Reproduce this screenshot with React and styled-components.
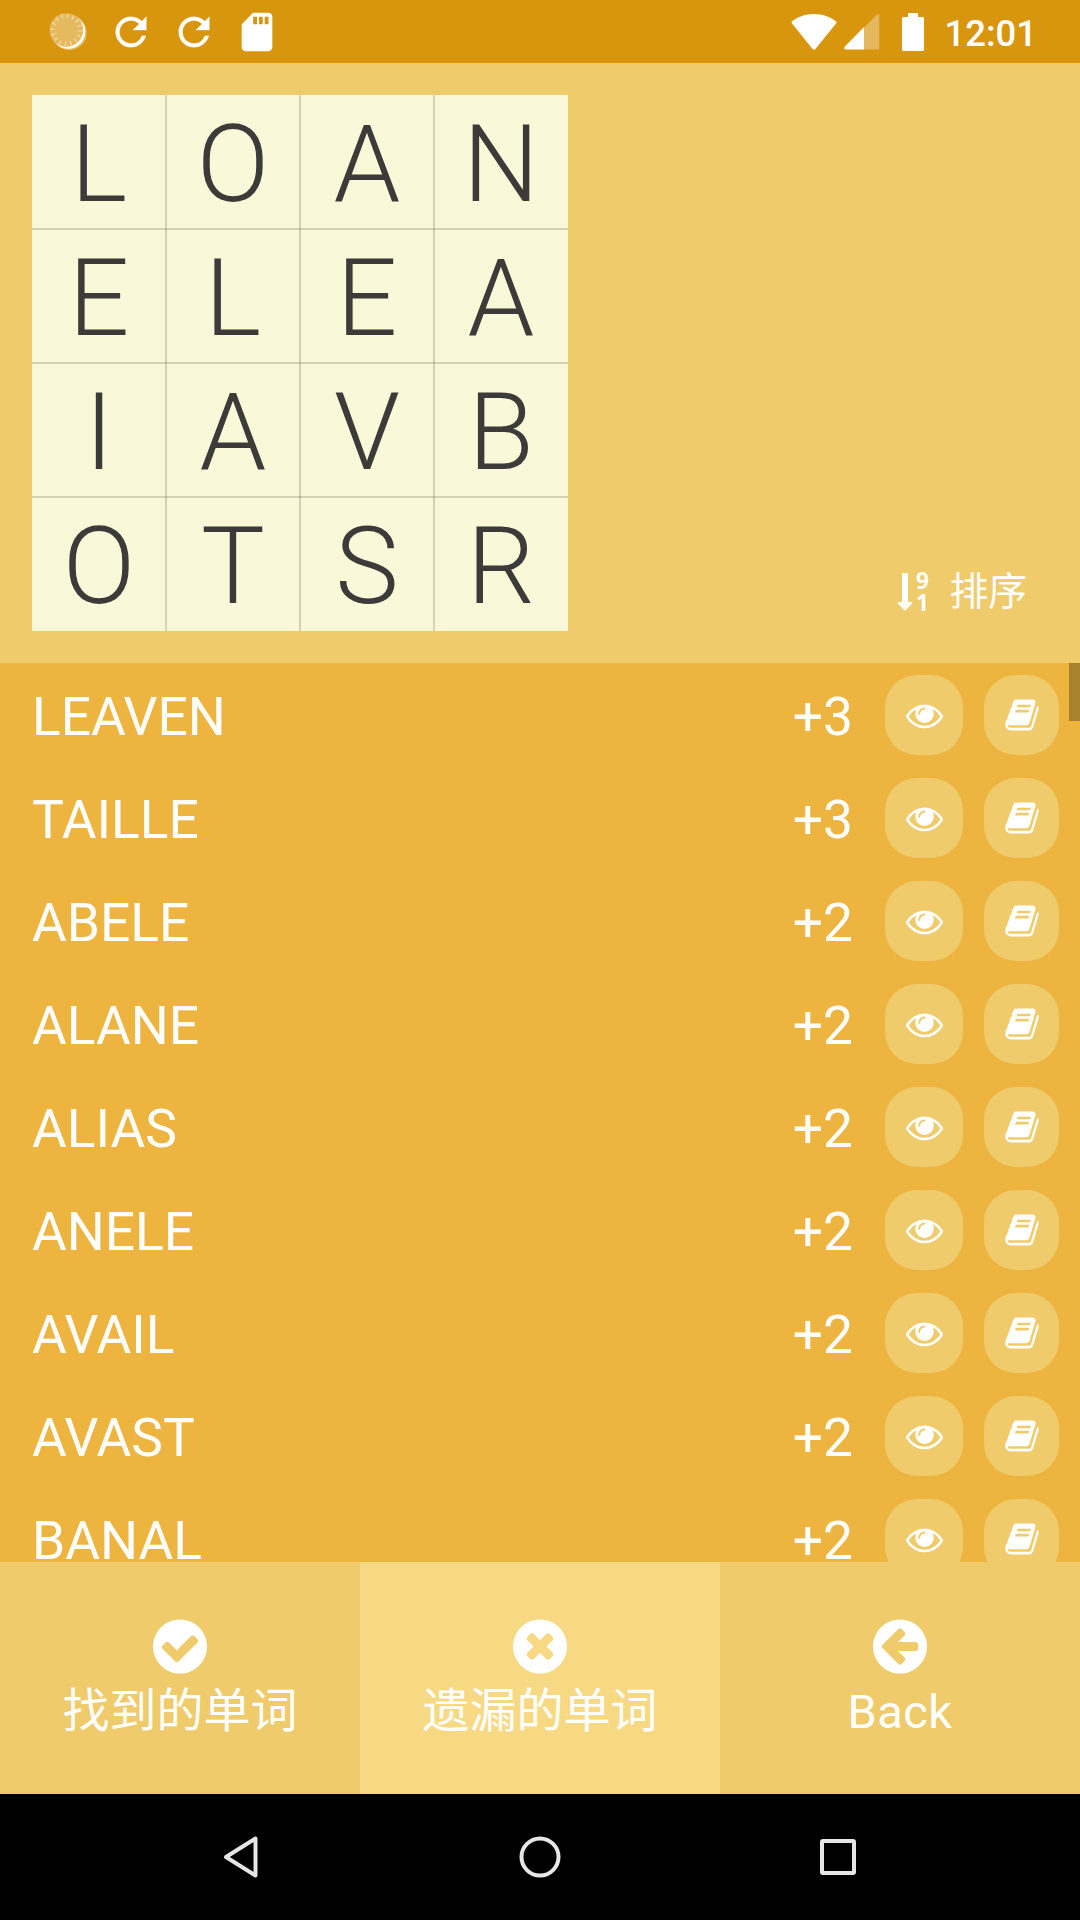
import React from "react";
import styled, { createGlobalStyle } from "styled-components";
import { MdSdCard } from "react-icons/md";

const Global = createGlobalStyle`
  * { box-sizing: border-box; }
  body { margin: 0; background: #000; font-family: Roboto, "Noto Sans CJK SC", sans-serif; }
  svg { display: block; flex: none; }
`;

const Screen = styled.div`
  width: 1080px;
  height: 1920px;
  display: flex;
  flex-direction: column;
  overflow: hidden;
  color: #fff;
`;

const StatusBar = styled.header`
  height: 63px;
  flex: none;
  display: flex;
  align-items: center;
  justify-content: space-between;
  padding: 0 43px 0 48px;
  background: #d8960f;
`;

const StatusGroup = styled.div`
  display: flex;
  align-items: center;
  gap: ${(p) => p.$gap}px;
`;

const Clock = styled.span`
  font-size: 36.5px;
  font-weight: 500;
  line-height: 63px;
  margin-left: 20px;
  padding-top: 3px;
`;

const Header = styled.section`
  height: 600px;
  flex: none;
  display: flex;
  justify-content: space-between;
  align-items: flex-end;
  padding: 32px 53px 32px 32px;
  background: #efcb6b;
`;

const Board = styled.div`
  display: grid;
  grid-template-columns: repeat(4, 134px);
  grid-auto-rows: 134px;
  overflow: hidden;
`;

const line = "rgba(60, 58, 57, 0.2)";
const Cell = styled.div`
  display: flex;
  align-items: center;
  justify-content: center;
  padding-top: 4px;
  background: #f9f8d8;
  color: #3d3b39;
  font-size: 107px;
  font-weight: 300;
  line-height: 107px;
  box-shadow:
    inset ${(p) => (p.$col > 0 ? 1 : 0)}px 0 ${line},
    inset ${(p) => (p.$col < 3 ? -1 : 0)}px 0 ${line},
    inset 0 ${(p) => (p.$row > 0 ? 1 : 0)}px ${line},
    inset 0 ${(p) => (p.$row < 3 ? -1 : 0)}px ${line};
`;

const SortButton = styled.div`
  display: flex;
  align-items: center;
  height: 42px;
  margin-bottom: 18px;
`;

const SortDigits = styled.div`
  display: flex;
  flex-direction: column;
  width: 14px;
  margin: 0 20px 0 2px;
  font: 700 22.5px/22px "Open Sans", sans-serif;
  text-align: center;
`;

const SortLabel = styled.span`
  font-size: 38.8px;
  line-height: 42px;
`;

const List = styled.main`
  height: 899px;
  flex: none;
  display: flex;
  overflow: hidden;
  background: #edb540;
`;

const Rows = styled.div`
  flex: 1;
  padding-right: 10px;
`;

const Row = styled.div`
  height: 103px;
  display: flex;
  align-items: center;
  padding-left: 32px;
  padding-top: 1px;
`;

const Word = styled.span`
  flex: 1;
  font-size: 53.3px;
  line-height: 64px;
  padding-top: 3px;
`;

const Score = styled(Word)`
  flex: none;
  margin-right: 32px;
`;

const RoundButton = styled.div`
  width: ${(p) => p.$width}px;
  height: 80px;
  margin-right: ${(p) => p.$after}px;
  display: flex;
  align-items: center;
  justify-content: center;
  border-radius: 32px;
  background: #efcb6b;
`;

const ScrollThumb = styled.div`
  width: 11px;
  height: 58px;
  background: #a9822e;
`;

const Tabs = styled.nav`
  height: 232px;
  flex: none;
  display: grid;
  grid-template-columns: repeat(3, 1fr);
`;

const Tab = styled.div`
  display: flex;
  flex-direction: column;
  align-items: center;
  padding-top: 53px;
  background: ${(p) => (p.$active ? "#f8d983" : "#efcb6b")};
`;

const TabLabel = styled.span`
  font-size: 47px;
  line-height: 60px;
  margin-top: ${(p) => (p.$latin ? 4 : 3)}px;
  letter-spacing: ${(p) => (p.$latin ? 0.4 : 0)}px;
`;

const SystemNav = styled.footer`
  flex: 1;
  display: flex;
  align-items: center;
  justify-content: space-between;
  padding: 0 218px;
  background: #000;
`;

const disc =
  "q0 209-103 385.5t-279.5 279.5-385.5 103-385.5-103-279.5-279.5-103-385.5 103-385.5 279.5-279.5 385.5-103 385.5 103 279.5 279.5 103 385.5z";

const glyphs = {
  eye: "M1664 960q-152-236-381-353 61 104 61 225 0 185-131.5 316.5t-316.5 131.5-316.5-131.5-131.5-316.5q0-121 61-225-229 117-381 353 133 205 333.5 326.5t434.5 121.5 434.5-121.5 333.5-326.5zm-720-384q0-20-14-34t-34-14q-125 0-214.5 89.5t-89.5 214.5q0 20 14 34t34 14 34-14 14-34q0-86 61-147t147-61q20 0 34-14t14-34zm848 384q0 34-20 69-140 230-376.5 368.5t-499.5 138.5-499.5-139-376.5-368q-20-35-20-69t20-69q140-229 376.5-368t499.5-139 499.5 139 376.5 368q20 35 20 69z",
  book: "M1703 478q40 57 18 129l-275 906q-19 64-76.5 107.5t-122.5 43.5h-923q-77 0-148.5-53.5t-99.5-131.5q-24-67-2-127 0-4 3-27t4-37q1-8-3-21.5t-3-19.5q2-11 8-21t16.5-23.5 16.5-23.5q23-38 45-91.5t30-91.5q3-10 .5-30t-.5-28q3-11 17-28t17-23q21-36 42-92t25-90q1-9-2.5-32t.5-28q4-13 22-30.5t22-22.5q19-26 42.5-84.5t27.5-96.5q1-8-3-25.5t-2-26.5q2-8 9-18t18-23 17-21q8-12 16.5-30.5t15-35 16-36 19.5-32 26.5-23.5 36-11.5 47.5 5.5l-1 3q38-9 51-9h761q74 0 114 56t18 130l-274 906q-36 119-71.5 153.5t-128.5 34.5h-869q-27 0-38 15-11 16-1 43 24 70 144 70h923q29 0 56-15.5t35-41.5l300-987q7-22 5-57 38 15 59 43zm-1064 2q-4 13 2 22.5t20 9.5h608q13 0 25.5-9.5t16.5-22.5l21-64q4-13-2-22.5t-20-9.5h-608q-13 0-25.5 9.5t-16.5 22.5zm-83 256q-4 13 2 22.5t20 9.5h608q13 0 25.5-9.5t16.5-22.5l21-64q4-13-2-22.5t-20-9.5h-608q-13 0-25.5 9.5t-16.5 22.5z",
  check:
    "M1412 734q0-28-18-46l-91-90q-19-19-45-19t-45 19l-408 407-226-226q-19-19-45-19t-45 19l-91 90q-18 18-18 46 0 27 18 45l362 362q19 19 45 19 27 0 46-19l543-543q18-18 18-45zm252 162" + disc,
  times:
    "M1277 1122q0-26-19-45l-181-181 181-181q19-19 19-45 0-27-19-46l-90-90q-19-19-46-19-26 0-45 19l-181 181-181-181q-19-19-45-19-27 0-46 19l-90 90q-19 19-19 46 0 26 19 45l181 181-181 181q-19 19-19 45 0 27 19 46l90 90q19 19 46 19 26 0 45-19l181-181 181 181q19 19 45 19 27 0 46-19l90-90q19-19 19-46zm387-226" + disc,
  back:
    "M1408 960v-128q0-26-19-45t-45-19h-502l189-189q19-19 19-45t-19-45l-91-91q-18-18-45-18t-45 18l-362 362-91 91q-18 18-18 45t18 45l91 91 362 362q18 18 45 18t45-18l91-91q18-18 18-45t-18-45l-189-189h502q26 0 45-19t19-45zm256-64" + disc,
};

const Icon = ({ name, width, height = width, viewBox = "0 0 1792 1792" }) => (
  <svg width={width} height={height} viewBox={viewBox} fill="#fff">
    <path d={glyphs[name]} />
  </svg>
);

const CoinIcon = () => (
  <svg width="40" height="40" viewBox="0 0 40 40">
    <circle cx="21.3" cy="20.7" r="17.5" fill="#fff" opacity="0.35" />
    <circle cx="20.3" cy="19.7" r="17" fill="#fff" />
    <circle cx="18.4" cy="18" r="16.8" fill="#e5b95d" />
    <circle cx="18.4" cy="18" r="13.8" fill="none" stroke="#efd39b" strokeWidth="4.6" strokeDasharray="1.6 3.82" />
  </svg>
);

const RefreshIcon = () => (
  <svg width="46" height="46" viewBox="0 0 24 24" fill="#fff" stroke="#fff" strokeWidth="0.15">
    <path d="M17.650 6.350A7.958 7.958 0 0012 4c-4.420 0-7.990 3.580-7.990 8s3.570 8 7.990 8c3.730 0 6.840-2.550 7.730-6h-2.080A5.990 5.990 0 0112 18c-3.310 0-6-2.690-6-6s2.690-6 6-6c1.660 0 3.140.69 4.220 1.780L13 11h7V4l-2.350 2.350z" />
  </svg>
);

const WifiIcon = () => (
  <svg width="46" height="38" viewBox="0 0 46 38" fill="#fff">
    <path d="M23 1C14.5 1 6.800 3.800 1.200 8.200Q0 9.300 1 10.600L21.600 36Q23 37.600 24.400 36L45 10.600Q46 9.300 44.800 8.200C39.200 3.800 31.500 1 23 1Z" />
  </svg>
);

const SignalIcon = () => (
  <svg width="36" height="36" viewBox="0 0 36 36" fill="#fff">
    <path opacity="0.33" d="M20 13.500L32.700.8Q33.600 0 34.500.4T35.300 1.800V34Q35.300 35.500 33.800 35.500H20Z" />
    <path d="M20 13V35.500H1.500Q.2 35.500.2 34.300T.9 32.500Z" />
  </svg>
);

const BatteryIcon = () => (
  <svg width="22" height="38" viewBox="0 0 22 38" fill="#fff">
    <path d="M6 0H16V4H20.500Q22 4 22 5.500V36.500Q22 38 20.500 38H1.500Q0 38 0 36.500V5.500Q0 4 1.500 4H6Z" />
  </svg>
);

const SortArrow = () => (
  <svg width="16" height="38" viewBox="0 0 16 38" fill="#fff">
    <path d="M5.600 0H10.400Q11 0 11 .6V29H14.800Q16 29.300 15.200 30.400L8.600 37.200Q8 37.700 7.400 37.200L.8 30.400Q0 29.300 1.200 29H5V.6Q5 0 5.600 0Z" />
  </svg>
);

const NavIcon = ({ children }) => (
  <svg width="48" height="48" viewBox="0 0 48 48" fill="none" stroke="#e6e6e6" strokeWidth="4" strokeLinejoin="round">
    {children}
  </svg>
);

const letters = "LOANELEAIAVBOTSR".split("");
const words = [
  ["LEAVEN", 3], ["TAILLE", 3], ["ABELE", 2], ["ALANE", 2], ["ALIAS", 2],
  ["ANELE", 2], ["AVAIL", 2], ["AVAST", 2], ["BANAL", 2],
];
const tabs = [
  { icon: "check", label: "找到的单词" },
  { icon: "times", label: "遗漏的单词", active: true },
  { icon: "back", label: "Back", latin: true },
];

export default function App() {
  return (
    <>
      <Global />
      <Screen>
        <StatusBar>
          <StatusGroup $gap={17}>
            <StatusGroup $gap={20}>
              <CoinIcon />
              <RefreshIcon />
            </StatusGroup>
            <RefreshIcon />
            <MdSdCard size={46} color="#fff" />
          </StatusGroup>
          <StatusGroup $gap={22}>
            <StatusGroup $gap={7}>
              <WifiIcon />
              <SignalIcon />
            </StatusGroup>
            <StatusGroup $gap={0}>
              <BatteryIcon />
              <Clock>12:01</Clock>
            </StatusGroup>
          </StatusGroup>
        </StatusBar>
        <Header>
          <Board>
            {letters.map((l, i) => (
              <Cell key={i} $col={i % 4} $row={Math.floor(i / 4)}>{l}</Cell>
            ))}
          </Board>
          <SortButton>
            <SortArrow />
            <SortDigits>
              <span>9</span>
              <span>1</span>
            </SortDigits>
            <SortLabel>排序</SortLabel>
          </SortButton>
        </Header>
        <List>
          <Rows>
            {words.map(([word, score]) => (
              <Row key={word}>
                <Word>{word}</Word>
                <Score>+{score}</Score>
                <RoundButton $width={78} $after={21}>
                  <Icon name="eye" width={37} viewBox="0 20 1792 1792" />
                </RoundButton>
                <RoundButton $width={75} $after={0}>
                  <Icon name="book" width={36} />
                </RoundButton>
              </Row>
            ))}
          </Rows>
          <ScrollThumb />
        </List>
        <Tabs>
          {tabs.map((t) => (
            <Tab key={t.icon} $active={t.active}>
              <Icon name={t.icon} width={63} viewBox="14 0 1792 1792" />
              <TabLabel $latin={t.latin}>{t.label}</TabLabel>
            </Tab>
          ))}
        </Tabs>
        <SystemNav>
          <NavIcon><path d="M8 24L37.500 5.500V42.500Z" /></NavIcon>
          <NavIcon><circle cx="24" cy="24" r="18.500" /></NavIcon>
          <NavIcon><rect x="8" y="8" width="32" height="32" rx="1" /></NavIcon>
        </SystemNav>
      </Screen>
    </>
  );
}
